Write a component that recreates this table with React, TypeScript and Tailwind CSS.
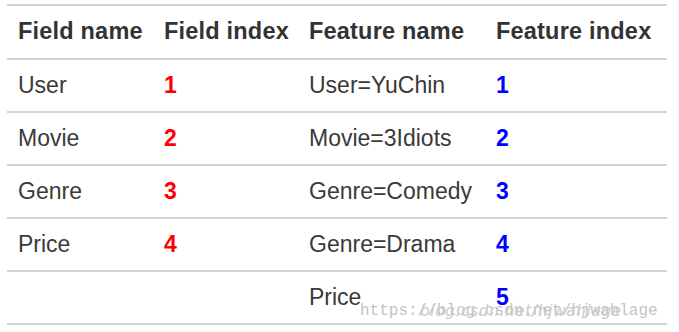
import React from "react";

const rows = [
  ["User", "1", "User=YuChin", "1"],
  ["Movie", "2", "Movie=3Idiots", "2"],
  ["Genre", "3", "Genre=Comedy", "3"],
  ["Price", "4", "Genre=Drama", "4"],
  ["", "", "Price", "5"],
];

export default function App() {
  return (
    <div
      className="w-[679px] h-[332px] bg-white relative overflow-hidden"
      style={{ fontFamily: '"Liberation Sans", Arial, sans-serif' }}
    >
      <div className="ml-[7px] mt-[4px] w-[660px] border-t-2 border-[#d2d2d2]">
        <div className="grid grid-cols-[146px_145px_187px_1fr] h-[54px] items-center border-b-2 border-[#d2d2d2] text-[23.5px] font-bold text-[#333] tracking-[0.2px]">
          <div className="pl-[11px]">Field name</div>
          <div className="pl-[11px]">Field index</div>
          <div className="pl-[11px]">Feature name</div>
          <div className="pl-[11px]">Feature index</div>
        </div>
        {rows.map((r, i) => (
          <div
            key={i}
            className="grid grid-cols-[146px_145px_187px_1fr] h-[53px] items-center border-b-2 border-[#d2d2d2] text-[23px] text-[#3a3a3a]"
          >
            <div className="pl-[11px]">{r[0]}</div>
            <div className="pl-[11px] font-bold text-[#ff0000]">{r[1]}</div>
            <div className="pl-[11px]">{r[2]}</div>
            <div className="pl-[11px] font-bold text-[#0000ff]">{r[3]}</div>
          </div>
        ))}
      </div>
      <div
        className="absolute left-[360px] top-[303px] text-[16px] text-[#c4c4c4] leading-none whitespace-nowrap"
        style={{ fontFamily: '"Liberation Mono", "DejaVu Sans Mono", monospace' }}
      >
        https://blog.csdn.net/hjwahlage
      </div>
      <div
        className="absolute left-[420px] top-[304px] text-[15px] text-[#cacaca] leading-none whitespace-nowrap italic tracking-[0.8px]"
        style={{ fontFamily: '"DejaVu Sans", sans-serif' }}
      >
        blog.csdn.net/hjwahlage
      </div>
    </div>
  );
}
